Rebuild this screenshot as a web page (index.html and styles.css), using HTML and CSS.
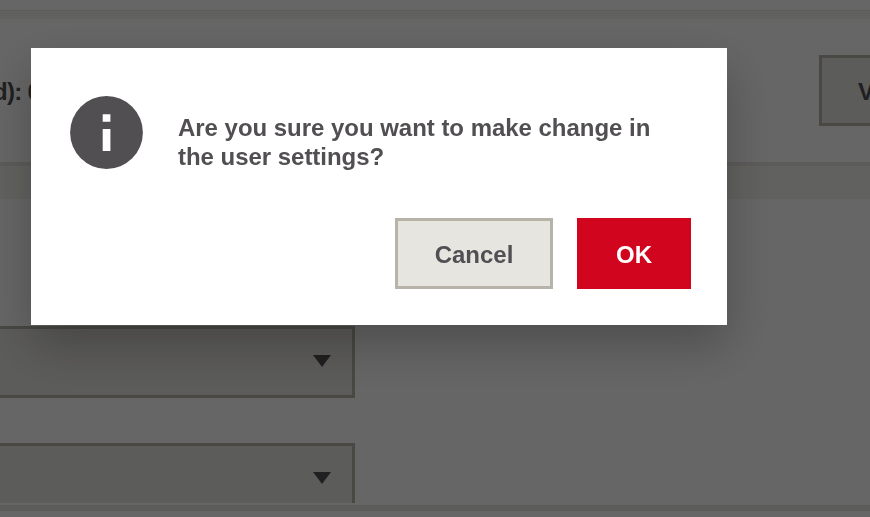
FILE: index.html
```
<!DOCTYPE html>
<html lang="en">
<head>
  <meta charset="UTF-8">
  <title>User settings</title>
  <link rel="stylesheet" href="styles.css">
</head>
<body>
  <div class="page">
    <div class="top-strip"></div>
    <div class="info-bar">
      <span class="info-label">d): 0</span>
      <button class="btn view-btn">View</button>
    </div>
    <div class="divider"></div>
    <div class="settings">
      <div class="select">
        <svg width="18" height="12" viewBox="0 0 18 12"><path d="M0 0h18L9 12z" fill="#524f53"/></svg>
      </div>
      <div class="select select-cut">
        <svg width="18" height="12" viewBox="0 0 18 12"><path d="M0 0h18L9 12z" fill="#524f53"/></svg>
      </div>
    </div>
    <div class="footer"></div>
  </div>

  <div class="overlay">
    <div class="dialog">
      <div class="dialog-body">
        <svg class="info-icon" width="73" height="73" viewBox="0 0 73 73">
          <circle cx="36.5" cy="36.5" r="36.4" fill="#524f53"/>
          <path d="M32.7 18.3h7.7v7.5h-7.7zM32.7 33h7.7v22h-7.7z" fill="#fff"/>
        </svg>
        <p class="message">Are you sure you want to make change in<br>the user settings?</p>
      </div>
      <div class="dialog-actions">
        <button class="btn cancel-btn">Cancel</button>
        <button class="btn ok-btn">OK</button>
      </div>
    </div>
  </div>
</body>
</html>
```
FILE: styles.css
```
* {
  box-sizing: border-box;
}

body {
  margin: 0;
  height: 517px;
  overflow: hidden;
  background: #fff;
  color: #524f53;
  font-family: "Liberation Sans", Arial, sans-serif;
  font-size: 24px;
  font-weight: bold;
}

.page {
  display: flex;
  flex-direction: column;
  height: 517px;
  overflow: hidden;
}

.top-strip {
  height: 19px;
  flex: none;
  border-top: 10px solid #fff;
  background: linear-gradient(#e6e5e0 1px, #f3f3ed 1px);
  background-clip: padding-box;
}

.info-bar {
  display: flex;
  justify-content: space-between;
  height: 143px;
  flex: none;
  padding-top: 36px;
}

.info-label {
  margin-left: -7px;
  line-height: 74px;
  letter-spacing: -0.7px;
  white-space: nowrap;
}

.btn {
  height: 71px;
  padding: 2px 0 0;
  border: 3px solid #b8b3a8;
  background: #e6e5e0;
  color: #524f53;
  font: inherit;
}

.view-btn {
  width: 140px;
  margin-right: -89px;
  padding-left: 36px;
  text-align: left;
  flex: none;
}

.divider {
  height: 37px;
  flex: none;
  border-top: 4px solid #e6e5e0;
  background: #f3f3ed;
}

.settings {
  height: 304px;
  flex: none;
  padding-top: 127px;
  overflow: hidden;
}

.select {
  display: flex;
  align-items: center;
  justify-content: flex-end;
  width: 355px;
  height: 72px;
  padding: 0 21px 2px 0;
  border: 3px solid #b8b3a8;
  border-left: none;
  background: #e6e5e0;
}

.select-cut {
  align-items: flex-start;
  height: 60px;
  margin-top: 45px;
  padding-top: 26px;
  border-bottom: none;
}

.footer {
  height: 14px;
  flex: none;
  border-top: 2px solid #fff;
  border-bottom: 6px solid #fff;
  background: #e6e5e0;
}

.overlay {
  position: fixed;
  top: 0; left: 0;
  width: 100%; height: 100%;
  padding: 48px 0 0 31px;
  background: rgba(0,0,0,0.6);
}

.dialog {
  width: 696px;
  height: 277px;
  padding: 48px 36px 36px 39px;
  background: #fff;
  box-shadow: 0 20px 46px rgba(0,0,0,0.25);
}

.dialog-body {
  display: flex;
  gap: 35px;
  height: 122px;
}

.message {
  margin: 17px 0 0;
  line-height: 29px;
  letter-spacing: -0.03px;
  white-space: nowrap;
}

.dialog-actions {
  display: flex;
  justify-content: flex-end;
  gap: 24px;
}

.cancel-btn {
  width: 158px;
}

.ok-btn {
  width: 114px;
  border-color: #d2051e;
  background: #d2051e;
  color: #fff;
}
```
